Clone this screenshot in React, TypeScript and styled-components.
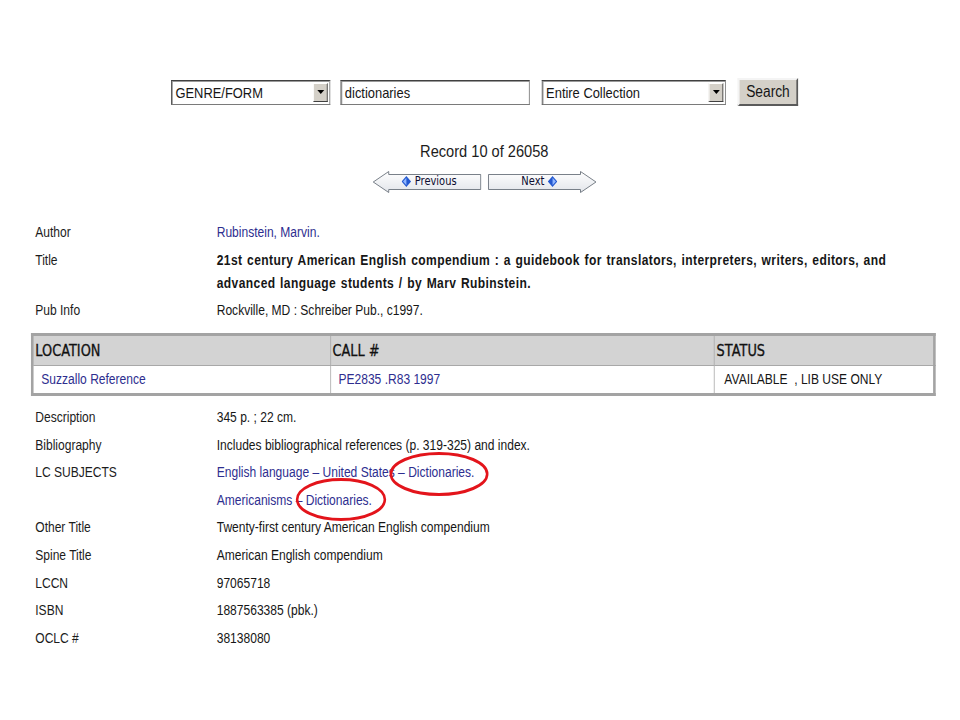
import React from "react";
import styled, { createGlobalStyle } from "styled-components";

const GlobalStyle = createGlobalStyle`
  html, body {
    margin: 0;
    padding: 0;
    background: #ffffff;
    overflow: hidden;
  }
  body {
    font-family: "Liberation Sans", Arial, sans-serif;
    color: #161616;
  }
`;

// the whole screenshot is squeezed horizontally, so lay out wide and scale down
const SCALE = 0.86;

const Page = styled.div`
  position: relative;
  width: ${960 / SCALE}px;
  height: 720px;
  transform: scaleX(${SCALE});
  transform-origin: 0 0;
  font-size: 14px;
`;

const SearchBar = styled.div`
  display: flex;
  align-items: center;
  padding: 78px 0 0 199px;
  height: 28px;
`;

const Field = styled.div<{ $w: number; $gap?: number }>`
  display: flex;
  align-items: center;
  box-sizing: border-box;
  width: ${(p) => p.$w}px;
  height: 25px;
  margin-right: ${(p) => p.$gap ?? 0}px;
  border: 1px solid #7a7a7a;
  border-top-color: #404040;
  border-left-color: #404040;
  box-shadow: inset 1px 1px 0 #9a9a9a;
  background: #fff;
  font-size: 15px;
  padding-left: 4px;
`;

const FieldText = styled.span`
  flex: 1;
  white-space: nowrap;
`;

const DropArrow = styled.span`
  width: 17px;
  height: 19px;
  margin-right: 2px;
  box-sizing: border-box;
  background: #d4d0c8;
  border: 1px solid #fff;
  border-right-color: #404040;
  border-bottom-color: #404040;
  display: flex;
  align-items: center;
  justify-content: center;
  &::after {
    content: "";
    border-left: 4px solid transparent;
    border-right: 4px solid transparent;
    border-top: 4px solid #000;
  }
`;

const SearchButton = styled.div`
  box-sizing: border-box;
  width: 70px;
  height: 28px;
  display: flex;
  align-items: center;
  justify-content: center;
  background: #d4d0c8;
  border: 2px solid #f4f4f4;
  border-right-color: #5a5a5a;
  border-bottom-color: #5a5a5a;
  font-size: 16px;
`;

const RecordBlock = styled.div`
  display: flex;
  flex-direction: column;
  align-items: center;
  padding: 35px 0 0 10px;
`;

const RecordText = styled.div`
  font-size: 17px;
  line-height: 22px;
  color: #1c1c1c;
`;

const NavRow = styled.div`
  display: flex;
  gap: 7px;
  margin-top: 8px;
`;

const NavButton = styled.div<{ $dir: "left" | "right" }>`
  position: relative;
  width: 127px;
  height: 22px;
  display: flex;
  align-items: center;
  justify-content: center;
  padding: ${(p) => (p.$dir === "left" ? "0 0 2px 6px" : "0 6px 2px 0")};
  box-sizing: border-box;
  font-family: "DejaVu Sans", Verdana, sans-serif;
  font-size: 11.5px;
  color: #0c0c30;
  & > svg.shape {
    position: absolute;
    inset: 0;
  }
  & > span {
    position: relative;
    display: flex;
    align-items: center;
    gap: 4px;
  }
`;

const Diamond = ({ dir }: { dir: "left" | "right" }) => (
  <svg width="11" height="11" viewBox="0 0 10 10">
    <path d="M5 0 L10 5 L5 10 L0 5 Z" fill="#2358d0" />
    <path
      d={dir === "left" ? "M5 1.5 L1.5 5 L5 8.5 Z" : "M5 1.5 L8.5 5 L5 8.5 Z"}
      fill="#8fb6ff"
    />
  </svg>
);

const ArrowShape = ({ dir }: { dir: "left" | "right" }) => {
  const d =
    dir === "left"
      ? "M1 11 L19 0.5 L19 3.5 L126 3.5 L126 18.5 L19 18.5 L19 21.5 Z"
      : "M126 11 L108 0.5 L108 3.5 L1 3.5 L1 18.5 L108 18.5 L108 21.5 Z";
  return (
    <svg className="shape" width="127" height="22" viewBox="0 0 127 22">
      <defs>
        <linearGradient id={`g-${dir}`} x1="0" y1="0" x2="0" y2="1">
          <stop offset="0" stopColor="#ffffff" />
          <stop offset="1" stopColor="#e2e5ea" />
        </linearGradient>
      </defs>
      <path d={d} fill={`url(#g-${dir})`} stroke="#6f7680" strokeWidth="1" />
    </svg>
  );
};

const Details = styled.div<{ $top: number }>`
  padding: ${(p) => p.$top}px 0 0 41px;
`;

const Row = styled.div`
  display: grid;
  grid-template-columns: 211px 800px;
  padding: 2.3px 0;
  line-height: 23px;
`;

const Label = styled.div`
  color: #1c1c1c;
`;

const Value = styled.div<{ $bold?: boolean }>`
  ${(p) =>
    p.$bold &&
    `
    font-weight: bold;
    font-size: 14px;
    letter-spacing: 0.47px;
    word-spacing: 1px;
  `}
`;

const Link = styled.span`
  color: #2e2e8f;
`;

const HoldingsTable = styled.table`
  margin: 8px 0 0 36px;
  width: 1052px;
  border-collapse: collapse;
  border: 3px solid #a3a3a3;
  table-layout: fixed;
`;

const Th = styled.th<{ $w: string }>`
  width: ${(p) => p.$w};
  height: 28px;
  background: #d3d3d3;
  border: 1px solid #a8a8a8;
  text-align: left;
  padding: 1px 2px 0;
  font-family: "DejaVu Sans", Verdana, sans-serif;
  font-weight: normal;
  font-size: 15px;
  color: #111;
  -webkit-text-stroke: 0.3px #111;
`;

const Td = styled.td`
  height: 27px;
  border: 1px solid #b0b0b0;
  padding: 0 3px 0 9px;
  font-size: 14px;
`;

const StatusCell = styled(Td)`
  padding-left: 11px;
`;

const Circle = styled.svg<{ $x: number; $y: number; $w: number; $h: number }>`
  position: absolute;
  left: ${(p) => p.$x}px;
  top: ${(p) => p.$y}px;
  width: ${(p) => p.$w}px;
  height: ${(p) => p.$h}px;
  overflow: visible;
`;

const RedRing = ({ x, y, w, h }: { x: number; y: number; w: number; h: number }) => (
  <Circle $x={x} $y={y} $w={w} $h={h} viewBox={`0 0 ${w} ${h}`}>
    <ellipse
      cx={w / 2}
      cy={h / 2}
      rx={w / 2 - 1.5}
      ry={h / 2 - 1.5}
      fill="none"
      stroke="#e3141b"
      strokeWidth="3"
    />
  </Circle>
);

const topRows: [string, React.ReactNode, boolean?][] = [
  ["Author", <Link>Rubinstein, Marvin.</Link>],
  [
    "Title",
    "21st century American English compendium : a guidebook for translators, interpreters, writers, editors, and advanced language students / by Marv Rubinstein.",
    true,
  ],
  ["Pub Info", "Rockville, MD : Schreiber Pub., c1997."],
];

const bottomRows: [string, React.ReactNode][] = [
  ["Description", "345 p. ; 22 cm."],
  ["Bibliography", "Includes bibliographical references (p. 319-325) and index."],
  ["LC SUBJECTS", <Link>English language – United States – Dictionaries.</Link>],
  ["", <Link>Americanisms – Dictionaries.</Link>],
  ["Other Title", "Twenty-first century American English compendium"],
  ["Spine Title", "American English compendium"],
  ["LCCN", "97065718"],
  ["ISBN", "1887563385 (pbk.)"],
  ["OCLC #", "38138080"],
];

export default function App() {
  return (
    <>
      <GlobalStyle />
      <Page>
        <SearchBar>
          <Field $w={185} $gap={12}>
            <FieldText>GENRE/FORM</FieldText>
            <DropArrow />
          </Field>
          <Field $w={220} $gap={14}>
            <FieldText>dictionaries</FieldText>
          </Field>
          <Field $w={214} $gap={14}>
            <FieldText>Entire Collection</FieldText>
            <DropArrow />
          </Field>
          <SearchButton>Search</SearchButton>
        </SearchBar>

        <RecordBlock>
          <RecordText>Record 10 of 26058</RecordText>
          <NavRow>
            <NavButton $dir="left">
              <ArrowShape dir="left" />
              <span>
                <Diamond dir="left" />
                Previous
              </span>
            </NavButton>
            <NavButton $dir="right">
              <ArrowShape dir="right" />
              <span>
                Next
                <Diamond dir="right" />
              </span>
            </NavButton>
          </NavRow>
        </RecordBlock>

        <Details $top={26}>
          {topRows.map(([label, value, bold]) => (
            <Row key={label}>
              <Label>{label}</Label>
              <Value $bold={bold}>{value}</Value>
            </Row>
          ))}
        </Details>

        <HoldingsTable>
          <thead>
            <tr>
              <Th $w="33%">LOCATION</Th>
              <Th $w="42.8%">CALL #</Th>
              <Th $w="24.2%">STATUS</Th>
            </tr>
          </thead>
          <tbody>
            <tr>
              <Td>
                <Link>Suzzallo Reference</Link>
              </Td>
              <Td>
                <Link>PE2835 .R83 1997</Link>
              </Td>
              <StatusCell>AVAILABLE&nbsp;&nbsp;, LIB USE ONLY</StatusCell>
            </tr>
          </tbody>
        </HoldingsTable>

        <Details $top={8}>
          {bottomRows.map(([label, value], i) => (
            <Row key={i}>
              <Label>{label}</Label>
              <Value>{value}</Value>
            </Row>
          ))}
        </Details>

        <RedRing x={453} y={452} w={115} h={44} />
        <RedRing x={344} y={478} w={105} h={43} />
      </Page>
    </>
  );
}
